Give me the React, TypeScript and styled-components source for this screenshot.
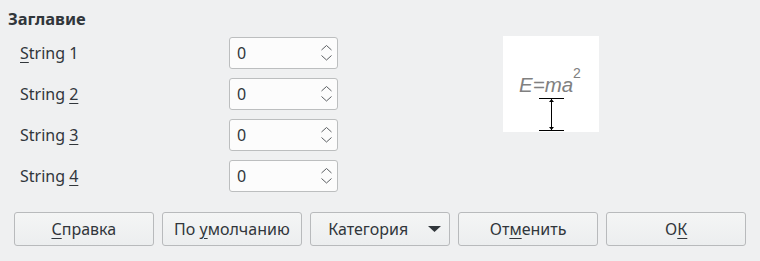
import React from 'react';
import styled, { createGlobalStyle } from 'styled-components';

const Global = createGlobalStyle`
    html, body {
        margin: 0;
        padding: 0;
        background: #eff0f1;
    }
    body {
        font-family: 'Noto Sans', 'DejaVu Sans', sans-serif;
        color: #31363b;
    }
`;

const Dialog = styled.div`
    width: 760px;
    height: 261px;
    box-sizing: border-box;
    padding: 9px 0 0 0;
    display: flex;
    flex-direction: column;
`;

const Title = styled.div`
    font-size: 16.5px;
    font-weight: 700;
    line-height: 20px;
    padding-left: 8px;
    color: #31363b;
`;

const Body = styled.div`
    display: flex;
    align-items: flex-start;
    padding: 8px 0 0 20px;
`;

const Grid = styled.div`
    display: grid;
    grid-template-columns: 209px 109px;
    grid-auto-rows: 32px;
    row-gap: 9px;
    align-items: center;
`;

const Label = styled.label`
    font-size: 16px;
    line-height: 20px;
    u {
        text-decoration: underline;
        text-underline-offset: 3px;
    }
`;

const Spin = styled.div`
    height: 32px;
    box-sizing: border-box;
    border: 1px solid #bcbebf;
    border-radius: 3px;
    background: #fcfcfc;
    display: flex;
    align-items: center;
    padding: 0 5px 0 7px;
    font-size: 16px;
`;

const SpinValue = styled.span`
    flex: 1;
`;

const Preview = styled.div`
    margin: -1px 0 0 165px;
    width: 96px;
    height: 96px;
    background: #ffffff;
`;

const Buttons = styled.div`
    display: grid;
    grid-template-columns: repeat(5, minmax(0, 1fr));
    column-gap: 8.5px;
    padding: 0 14px;
    margin-top: 20px;
`;

const Button = styled.button<{ $menu?: boolean }>`
    height: 34px;
    box-sizing: border-box;
    border: 1px solid #b8babc;
    border-radius: 3px;
    background: linear-gradient(#f4f5f5, #eceeef);
    font-family: 'Noto Sans', 'DejaVu Sans', sans-serif;
    font-size: 16px;
    color: #31363b;
    display: flex;
    align-items: center;
    justify-content: ${(p) => (p.$menu ? 'space-between' : 'center')};
    padding: ${(p) => (p.$menu ? '0 8px 0 17px' : '0')};
    u {
        text-decoration: underline;
        text-underline-offset: 3px;
    }
`;

const Chevrons = () => (
    <svg width="11" height="16" viewBox="0 0 11 16">
        <path d="M0.5 5 L5.5 0.5 L10.5 5" fill="none" stroke="#5a5e62" strokeWidth="1" />
        <path d="M0.5 10.5 L5.5 15 L10.5 10.5" fill="none" stroke="#5a5e62" strokeWidth="1" />
    </svg>
);

const Triangle = () => (
    <svg width="13" height="6" viewBox="0 0 13 6">
        <path d="M0 0 L13 0 L6.5 6 Z" fill="#31363b" />
    </svg>
);

const rows = [
    { pre: '', key: 'S', post: 'tring 1' },
    { pre: 'String ', key: '2', post: '' },
    { pre: 'String ', key: '3', post: '' },
    { pre: 'String ', key: '4', post: '' },
];

export default function App() {
    return (
        <>
            <Global />
            <Dialog>
                <Title>Заглавие</Title>
                <Body>
                    <Grid>
                        {rows.map((r, i) => (
                            <React.Fragment key={i}>
                                <Label>
                                    {r.pre}
                                    <u>{r.key}</u>
                                    {r.post}
                                </Label>
                                <Spin>
                                    <SpinValue>0</SpinValue>
                                    <Chevrons />
                                </Spin>
                            </React.Fragment>
                        ))}
                    </Grid>
                    <Preview>
                        <svg width="96" height="96" viewBox="0 0 96 96">
                            <text
                                x="16"
                                y="56"
                                fontFamily="'Liberation Sans', Arial, sans-serif"
                                fontStyle="italic"
                                fontSize="20.5"
                                fill="#808080"
                            >
                                E=ma
                            </text>
                            <text
                                x="70"
                                y="42"
                                fontFamily="'Liberation Sans', Arial, sans-serif"
                                fontSize="14"
                                fill="#808080"
                            >
                                2
                            </text>
                            <path d="M36 62.5 H61 M36 94.5 H61" stroke="#000" strokeWidth="1" />
                            <path d="M48.5 63 V94" stroke="#000" strokeWidth="1" />
                            <path d="M46 66 L48.5 63 L51 66 Z M46 91 L48.5 94 L51 91 Z" fill="#000" />
                        </svg>
                    </Preview>
                </Body>
                <Buttons>
                    <Button>
                        <span>
                            <u>С</u>правка
                        </span>
                    </Button>
                    <Button>
                        <span>
                            По <u>у</u>молчанию
                        </span>
                    </Button>
                    <Button $menu>
                        <span>Категория</span>
                        <Triangle />
                    </Button>
                    <Button>
                        <span>
                            От<u>м</u>енить
                        </span>
                    </Button>
                    <Button>
                        <span>
                            О<u>К</u>
                        </span>
                    </Button>
                </Buttons>
            </Dialog>
        </>
    );
}
